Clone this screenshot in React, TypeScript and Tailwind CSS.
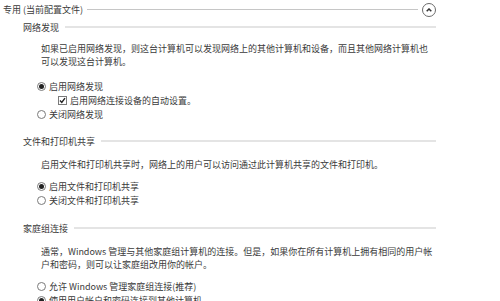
const FONT = { fontFamily: '"Microsoft YaHei", "Noto Sans CJK SC", "Noto Sans", sans-serif' }

function Radio({ checked, label }: { checked?: boolean; label: string }) {
  return (
    <div className="flex h-[14px] items-center pl-[37px]">
      <span className="flex h-[9px] w-[9px] shrink-0 items-center justify-center rounded-full border border-[#7a7a7a] bg-white">
        {checked && <span className="h-[5px] w-[5px] rounded-full bg-[#222]" />}
      </span>
      <span className="ml-[3px] whitespace-nowrap">{label}</span>
    </div>
  )
}

function Check({ label }: { label: string }) {
  return (
    <div className="flex h-[14px] items-center pl-[58px]">
      <span className="flex h-[9px] w-[9px] shrink-0 items-center justify-center border border-[#7a7a7a] bg-white">
        <svg width="7" height="7" viewBox="0 0 7 7">
          <path d="M1 3.5 L2.8 5.4 L6 1.2" fill="none" stroke="#222" strokeWidth="1.4" />
        </svg>
      </span>
      <span className="ml-[3px] whitespace-nowrap">{label}</span>
    </div>
  )
}

function SectionTitle({ title }: { title: string }) {
  return (
    <div className="flex h-[16px] items-center pl-[23px]">
      <span className="whitespace-nowrap">{title}</span>
      <div className="ml-[6px] h-[2px] flex-1 bg-[#e4e4e4]" />
    </div>
  )
}

export default function App() {
  return (
    <div className="h-[301px] w-[500px] overflow-hidden bg-white text-[9px] leading-[13px] text-[#3a3a3a]" style={FONT}>
      <div className="w-[436px]">
        {/* profile header */}
        <div className="flex h-[19px] items-center pl-[3px]">
          <span className="whitespace-nowrap">专用 (当前配置文件)</span>
          <div className="ml-[4px] mr-[4px] h-px flex-1 bg-[#c6c6c6]" />
          <span className="flex h-[14px] w-[14px] shrink-0 items-center justify-center rounded-full border border-[#6a6a6a]">
            <svg width="6" height="4" viewBox="0 0 6 4">
              <path d="M0.7 3.3 L3 1 L5.3 3.3" fill="none" stroke="#333" strokeWidth="1.5" />
            </svg>
          </span>
        </div>

        {/* network discovery */}
        <SectionTitle title="网络发现" />
        <p className="mt-[7px] pl-[41px]">
          如果已启用网络发现，则这台计算机可以发现网络上的其他计算机和设备，而且其他网络计算机也
          <br />
          可以发现这台计算机。
        </p>
        <div className="mt-[11px]">
          <Radio checked label="启用网络发现" />
          <Check label="启用网络连接设备的自动设置。" />
          <Radio label="关闭网络发现" />
        </div>

        {/* file & printer sharing */}
        <div className="mt-[12px]">
          <SectionTitle title="文件和打印机共享" />
        </div>
        <p className="mt-[9px] pl-[41px]">启用文件和打印机共享时，网络上的用户可以访问通过此计算机共享的文件和打印机。</p>
        <div className="mt-[8px]">
          <Radio checked label="启用文件和打印机共享" />
          <Radio label="关闭文件和打印机共享" />
        </div>

        {/* homegroup */}
        <div className="mt-[13px]">
          <SectionTitle title="家庭组连接" />
        </div>
        <p className="mt-[9px] pl-[41px]">
          通常，Windows 管理与其他家庭组计算机的连接。但是，如果你在所有计算机上拥有相同的用户帐
          <br />
          户和密码，则可以让家庭组改用你的帐户。
        </p>
        <div className="mt-[8px]">
          <Radio label="允许 Windows 管理家庭组连接(推荐)" />
          <Radio checked label="使用用户帐户和密码连接到其他计算机" />
        </div>
      </div>
    </div>
  )
}
